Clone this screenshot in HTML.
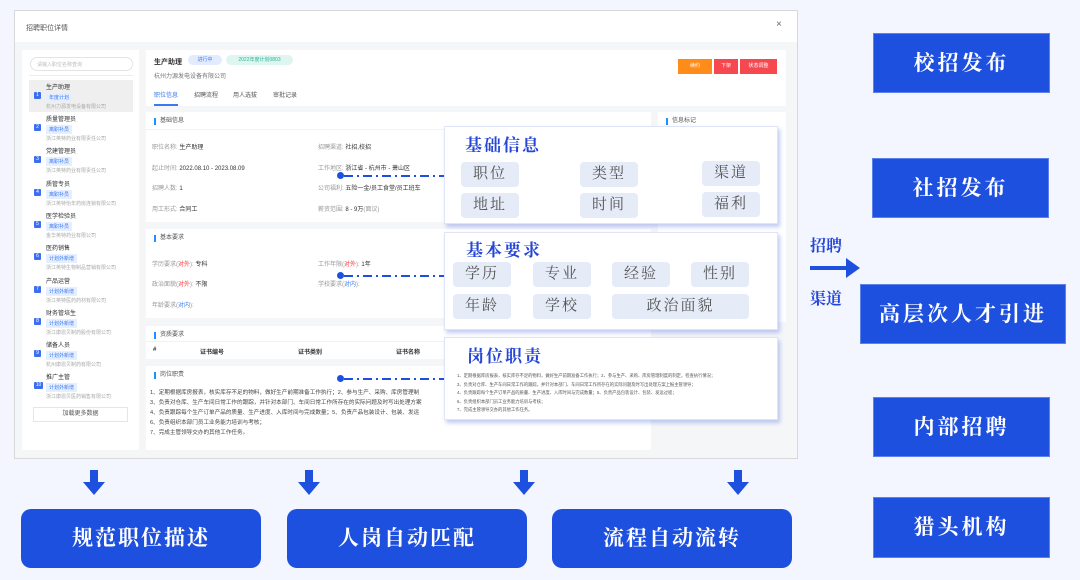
<!DOCTYPE html>
<html><head><meta charset="utf-8"><style>
*{margin:0;padding:0;box-sizing:border-box}
body{width:1080px;height:580px;background:#f3f6fe;position:relative;overflow:hidden;font-family:"Liberation Sans","Noto Sans CJK SC",sans-serif;color:#333}
.a{position:absolute}
.serif{font-family:"Liberation Serif","Noto Serif CJK SC",serif;font-weight:bold}
.t{font-size:6px;color:#999;white-space:nowrap}
.d{font-size:6px;color:#333;white-space:nowrap}
.card{background:#fff;position:absolute}
.hd{position:absolute;left:8px;top:6px;font-size:6px;color:#555;border-left:2px solid #1e90ff;padding-left:4px;line-height:7px}
.num{position:absolute;left:34px;width:7px;height:7px;background:#3b6ff0;color:#fff;font-size:5px;text-align:center;line-height:7px;border-radius:1px}
.li{position:absolute;left:46px;font-size:6px;color:#333}
.tag{display:inline-block;background:#e6efff;color:#3a7af0;font-size:5px;padding:1px 3px;margin-top:2px}
.co{font-size:5px;color:#aaa;margin-top:1px;white-space:nowrap}
.ov{position:absolute;left:444px;width:334px;background:#fff;border:1px solid #dfe5f7;box-shadow:2px 3px 4px rgba(80,110,220,.35)}
.ov h3{position:absolute;font-family:"Liberation Serif","Noto Serif CJK SC",serif;font-weight:bold;color:#2546d6;font-size:17px;letter-spacing:2px}
.pill{position:absolute;background:#e6ebf8;border-radius:4px;font-family:"Liberation Serif","Noto Serif CJK SC",serif;color:#555;font-size:15px;text-align:center;line-height:25px;height:25px;letter-spacing:2px}
.rb{position:absolute;background:#1e50e0;color:#fff;font-family:"Liberation Serif","Noto Serif CJK SC",serif;font-weight:bold;font-size:21px;text-align:center;letter-spacing:3px;border:1px solid #5b82ea}
.bb{position:absolute;top:509px;height:59px;background:#1e50e0;color:#fff;border-radius:10px;font-family:"Liberation Serif","Noto Serif CJK SC",serif;font-weight:bold;font-size:21px;text-align:center;line-height:59px;letter-spacing:2px}
.dn{position:absolute;top:470px;width:0;height:0}
.dn:before{content:"";position:absolute;left:-4px;top:0;width:8px;height:12px;background:#1e50e0}
.dn:after{content:"";position:absolute;left:-11px;top:12px;border-left:11px solid transparent;border-right:11px solid transparent;border-top:13px solid #1e50e0}
.dash{position:absolute;height:2px;background:repeating-linear-gradient(90deg,#1e50e0 0 9px,transparent 9px 13px,#1e50e0 13px 15px,transparent 15px 19px)}
.dot{position:absolute;width:7px;height:7px;border-radius:50%;background:#1e50e0}
.dt{font-size:5px;color:#555;white-space:nowrap;position:absolute}
</style></head><body>
<!-- screenshot panel -->
<div class="a" style="left:14px;top:10px;width:784px;height:449px;border:1px solid #d8d8d8;background:#f5f6f8"></div>
<div class="a" style="left:15px;top:11px;width:782px;height:31px;background:#fff"></div>
<div class="a" style="left:26px;top:23px;font-size:7px;color:#555">招聘职位详情</div>
<div class="a" style="left:776px;top:19px;font-size:10px;color:#666">×</div>

<!-- left list -->
<div class="card" style="left:22px;top:50px;width:117px;height:400px"></div>
<div class="a" style="left:30px;top:57px;width:103px;height:14px;border:1px solid #e4e4e4;border-radius:7px;font-size:5px;color:#bbb;padding:3px 6px">请输入职位名称查询</div>
<div class="a" style="left:29px;top:75px;width:104px;height:1px;background:#eee"></div>
<div class="a" style="left:29px;top:80px;width:104px;height:32px;background:#efefef"></div>
<div class="num" style="top:92px">1</div><div class="li" style="top:82px">生产助理<br><span class="tag">年度计划</span><div class="co">杭州力源发电设备有限公司</div></div>
<div class="num" style="top:124px">2</div><div class="li" style="top:114px">质量管理员<br><span class="tag">离职补员</span><div class="co">浙江英特药业有限责任公司</div></div>
<div class="num" style="top:156px">3</div><div class="li" style="top:146px">党建管理员<br><span class="tag">离职补员</span><div class="co">浙江英特药业有限责任公司</div></div>
<div class="num" style="top:189px">4</div><div class="li" style="top:179px">质管专员<br><span class="tag">离职补员</span><div class="co">浙江英特怡年药房连锁有限公司</div></div>
<div class="num" style="top:221px">5</div><div class="li" style="top:211px">医学检验员<br><span class="tag">离职补员</span><div class="co">金华英特药业有限公司</div></div>
<div class="num" style="top:253px">6</div><div class="li" style="top:243px">医药销售<br><span class="tag">计划外新增</span><div class="co">浙江英特生物制品营销有限公司</div></div>
<div class="num" style="top:286px">7</div><div class="li" style="top:276px">产品运营<br><span class="tag">计划外新增</span><div class="co">浙江英特医药药材有限公司</div></div>
<div class="num" style="top:318px">8</div><div class="li" style="top:308px">财务管培生<br><span class="tag">计划外新增</span><div class="co">浙江康恩贝制药股份有限公司</div></div>
<div class="num" style="top:350px">9</div><div class="li" style="top:340px">储备人员<br><span class="tag">计划外新增</span><div class="co">杭州康恩贝制药有限公司</div></div>
<div class="num" style="top:382px;width:9px">10</div><div class="li" style="top:372px">推广主管<br><span class="tag">计划外新增</span><div class="co">浙江康恩贝医药销售有限公司</div></div>
<div class="a" style="left:33px;top:407px;width:95px;height:15px;border:1px solid #e6e6e6;font-size:6px;color:#555;text-align:center;line-height:13px">加载更多数据</div>

<!-- main top card -->
<div class="card" style="left:146px;top:50px;width:640px;height:56px"></div>
<div class="a" style="left:154px;top:57px;font-size:7px;font-weight:bold;color:#333">生产助理</div>
<div class="a" style="left:188px;top:55px;width:34px;height:10px;border-radius:5px;background:#e3ebff;color:#3a7af0;font-size:5px;text-align:center;line-height:10px">进行中</div>
<div class="a" style="left:226px;top:55px;width:67px;height:10px;border-radius:5px;background:#dff5f0;color:#2bb59a;font-size:5px;text-align:center;line-height:10px">2022年度计划0803</div>
<div class="a t" style="left:154px;top:71px;color:#777">杭州力源发电设备有限公司</div>
<div class="a d" style="left:154px;top:90px;color:#3a7af0">职位信息</div>
<div class="a" style="left:154px;top:104px;width:24px;height:2px;background:#3a7af0"></div>
<div class="a d" style="left:194px;top:90px;color:#555">招聘流程</div>
<div class="a d" style="left:233px;top:90px;color:#555">用人选拔</div>
<div class="a d" style="left:273px;top:90px;color:#555">审批记录</div>
<div class="a" style="left:678px;top:59px;width:34px;height:15px;background:#ff8c1a;color:#fff;font-size:5px;text-align:center;line-height:15px">续约</div>
<div class="a" style="left:714px;top:59px;width:24px;height:15px;background:#f5484f;color:#fff;font-size:5px;text-align:center;line-height:15px">下架</div>
<div class="a" style="left:740px;top:59px;width:37px;height:15px;background:#f5484f;color:#fff;font-size:5px;text-align:center;line-height:15px">状态调整</div>

<!-- basic info -->
<div class="card" style="left:146px;top:112px;width:505px;height:110px"><div class="hd">基础信息</div></div>
<div class="a" style="left:146px;top:129px;width:505px;height:1px;background:#f2f2f2"></div>
<div class="a t" style="left:152px;top:142px">职位名称: <span style="color:#333">生产助理</span></div>
<div class="a t" style="left:152px;top:163px">起止时间: <span style="color:#333">2022.08.10 - 2023.08.09</span></div>
<div class="a t" style="left:152px;top:183px">招聘人数: <span style="color:#333">1</span></div>
<div class="a t" style="left:152px;top:204px">用工形式: <span style="color:#333">合同工</span></div>
<div class="a t" style="left:318px;top:142px">招聘渠道: <span style="color:#333">社招,校招</span></div>
<div class="a t" style="left:318px;top:163px">工作地区: <span style="color:#333">浙江省 - 杭州市 - 萧山区</span></div>
<div class="a t" style="left:318px;top:183px">公司福利: <span style="color:#333">五险一金/员工食堂/员工班车</span></div>
<div class="a t" style="left:318px;top:204px">薪资范围: <span style="color:#333">8 - 9万</span>(面议)</div>
<div class="card" style="left:658px;top:112px;width:128px;height:210px"><div class="hd">信息标记</div></div>

<!-- basic req -->
<div class="card" style="left:146px;top:229px;width:505px;height:89px"><div class="hd">基本要求</div></div>
<div class="a t" style="left:152px;top:259px">学历要求(<span style="color:#f33">对外</span>): <span style="color:#333">专科</span></div>
<div class="a t" style="left:152px;top:279px">政治面貌(<span style="color:#f33">对外</span>): <span style="color:#333">不限</span></div>
<div class="a t" style="left:152px;top:300px">年龄要求(<span style="color:#3a7af0">对内</span>):</div>
<div class="a t" style="left:318px;top:259px">工作年限(<span style="color:#f33">对外</span>): <span style="color:#333">1年</span></div>
<div class="a t" style="left:318px;top:279px">学校要求(<span style="color:#3a7af0">对内</span>):</div>

<div class="card" style="left:146px;top:326px;width:505px;height:33px"><div class="hd">资质要求</div></div>
<div class="a" style="left:146px;top:341px;width:505px;height:1px;background:#f2f2f2"></div>
<div class="a d" style="left:153px;top:347px;font-weight:bold">#</div>
<div class="a d" style="left:200px;top:347px;font-weight:bold">证书编号</div>
<div class="a d" style="left:298px;top:347px;font-weight:bold">证书类别</div>
<div class="a d" style="left:396px;top:347px;font-weight:bold">证书名称</div>

<div class="card" style="left:146px;top:366px;width:505px;height:84px"><div class="hd">岗位职责</div></div>
<div class="a" style="left:150px;top:388px;font-size:5.6px;line-height:10px;color:#444;white-space:nowrap">1、定期根据库房报表，核实库存不足的物料，做好生产前期准备工作执行；2、参与生产、采购、库房管理制<br>3、负责对仓库、生产车间日常工作的跟踪，并针对本部门、车间日常工作所存在的实际问题及时写出处理方案<br>4、负责跟踪每个生产订单产品的质量、生产进度、入库时间与完成数量；5、负责产品包装设计、包装、发运<br>6、负责组织本部门员工业务能力培训与考核；<br>7、完成主管领导交办的其他工作任务。</div>

<!-- connectors -->
<div class="dot" style="left:337px;top:172px"></div><div class="dash" style="left:344px;top:175px;width:100px"></div>
<div class="dot" style="left:337px;top:272px"></div><div class="dash" style="left:344px;top:275px;width:100px"></div>
<div class="dot" style="left:337px;top:375px"></div><div class="dash" style="left:344px;top:378px;width:100px"></div>

<!-- overlays -->
<div class="ov" style="top:126px;height:98px">
<h3 style="left:20px;top:4px">基础信息</h3>
<div class="pill" style="left:16px;top:35px;width:58px">职位</div>
<div class="pill" style="left:135px;top:35px;width:58px">类型</div>
<div class="pill" style="left:257px;top:34px;width:58px">渠道</div>
<div class="pill" style="left:16px;top:66px;width:58px">地址</div>
<div class="pill" style="left:135px;top:66px;width:58px">时间</div>
<div class="pill" style="left:257px;top:65px;width:58px">福利</div>
</div>
<div class="ov" style="top:232px;height:98px">
<h3 style="left:21px;top:3px">基本要求</h3>
<div class="pill" style="left:8px;top:29px;width:58px">学历</div>
<div class="pill" style="left:88px;top:29px;width:58px">专业</div>
<div class="pill" style="left:167px;top:29px;width:58px">经验</div>
<div class="pill" style="left:246px;top:29px;width:58px">性别</div>
<div class="pill" style="left:8px;top:61px;width:58px">年龄</div>
<div class="pill" style="left:88px;top:61px;width:58px">学校</div>
<div class="pill" style="left:167px;top:61px;width:137px">政治面貌</div>
</div>
<div class="ov" style="top:337px;height:83px">
<h3 style="left:22px;top:4px">岗位职责</h3>
<div class="a" style="left:12px;top:34px;font-size:4.3px;line-height:8.5px;color:#555;white-space:nowrap">1、定期根据库房报表，核实库存不足的物料，做好生产前期准备工作执行；2、参与生产、采购、库房管理制度的制定，检查执行情况；<br>3、负责对仓库、生产车间日常工作的跟踪，并针对本部门、车间日常工作所存在的实际问题及时写出处理方案上报主管领导；<br>4、负责跟踪每个生产订单产品的质量、生产进度、入库时间与完成数量；5、负责产品包装设计、包装、发运过程；<br>6、负责组织本部门员工业务能力培训与考核；<br>7、完成主管领导交办的其他工作任务。</div>
</div>

<!-- right channel boxes -->
<div class="rb" style="left:873px;top:33px;width:177px;height:60px;line-height:58px">校招发布</div>
<div class="rb" style="left:872px;top:158px;width:177px;height:60px;line-height:58px">社招发布</div>
<div class="rb" style="left:860px;top:284px;width:206px;height:60px;line-height:58px">高层次人才引进</div>
<div class="rb" style="left:873px;top:397px;width:177px;height:60px;line-height:58px">内部招聘</div>
<div class="rb" style="left:873px;top:497px;width:177px;height:61px;line-height:59px">猎头机构</div>
<div class="a serif" style="left:810px;top:233px;font-size:16px;color:#2546d6">招聘</div>
<div class="a" style="left:810px;top:266px;width:38px;height:4px;background:#1e50e0"></div>
<div class="a" style="left:846px;top:258px;border-top:10px solid transparent;border-bottom:10px solid transparent;border-left:14px solid #1e50e0"></div>
<div class="a serif" style="left:810px;top:286px;font-size:16px;color:#2546d6">渠道</div>

<!-- down arrows and bottom buttons -->
<div class="dn" style="left:94px"></div>
<div class="dn" style="left:309px"></div>
<div class="dn" style="left:524px"></div>
<div class="dn" style="left:738px"></div>
<div class="bb" style="left:21px;width:240px">规范职位描述</div>
<div class="bb" style="left:287px;width:240px">人岗自动匹配</div>
<div class="bb" style="left:552px;width:240px">流程自动流转</div>
</body></html>
